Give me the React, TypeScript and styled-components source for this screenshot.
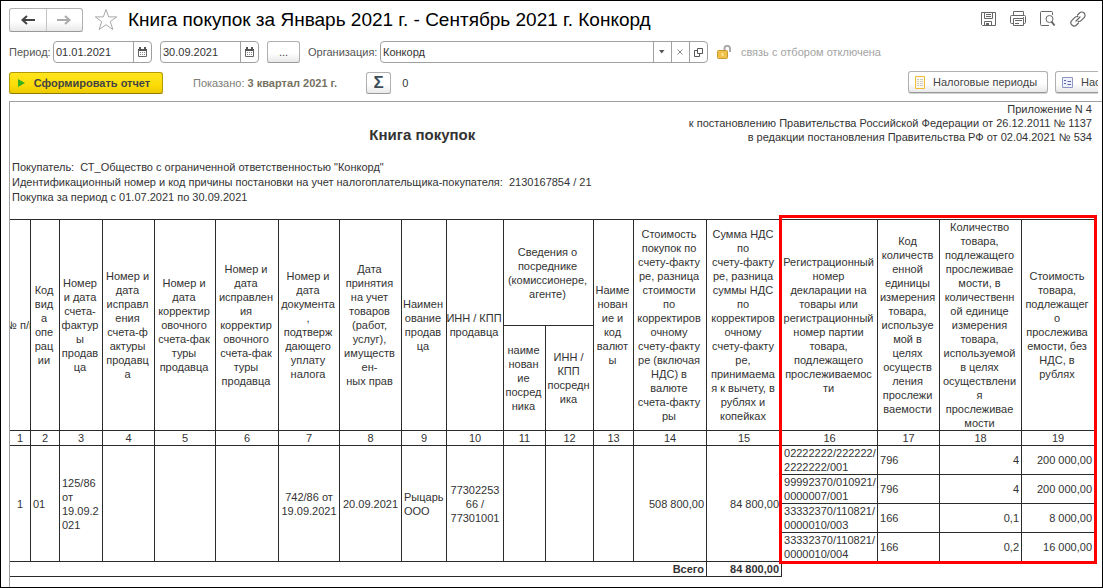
import React from "react";
import styled, { createGlobalStyle } from "styled-components";

const GlobalStyle = createGlobalStyle`
  *, *::before, *::after { box-sizing: border-box; }
  body { margin: 0; background: #fff; }
  body, button, input, table { font: 11px/14px "Liberation Sans", Arial, sans-serif; color: #333; }
  svg { flex: none; }
`;

const Frame = styled.main`
  display: flex;
  flex-direction: column;
  min-height: 100vh;
  padding: 6px 0 0 8px;
  border: 1px solid #000;
  overflow: hidden;
`;

const Bar = styled.div<{ $height: number; $after: number }>`
  display: flex;
  align-items: center;
  height: ${(p) => p.$height}px;
  margin-bottom: ${(p) => p.$after}px;
  white-space: nowrap;
  overflow: hidden;
`;

const Button = styled.button<{ $accent?: boolean; $width?: number }>`
  display: inline-flex;
  align-items: center;
  justify-content: center;
  flex: none;
  gap: 8px;
  width: ${(p) => (p.$width ? `${p.$width}px` : "auto")};
  height: 22px;
  padding: 0 10px 0 6px;
  border: 1px solid ${(p) => (p.$accent ? "#b39a00" : "#b0b0b0")};
  border-bottom-color: ${(p) => (p.$accent ? "#8f7b00" : "#999")};
  border-radius: 3px;
  background: ${(p) =>
    p.$accent
      ? "linear-gradient(#ffe51f, #fbdc08 60%, #ecca00)"
      : "linear-gradient(#fff 55%, #e9e9e9)"};
  box-shadow: 0 1px 0 ${(p) => (p.$accent ? "#c9b653" : "#d2d2d2")};
  color: #444;
  font-weight: ${(p) => (p.$accent ? "bold" : "normal")};
  cursor: pointer;
`;

const DotsButton = styled(Button)`
  margin: 0 8px;
  padding: 0;
`;

const SumButton = styled(Button)`
  margin: 0 11px 0 29px;
  padding: 0;
  color: #3b4d59;
  font-size: 17px;
  font-weight: bold;
`;

const ButtonGroup = styled.div`
  display: flex;
  gap: 7px;
  flex: none;
  width: 190px;
  margin-left: auto;
  margin-right: 4px;
  height: 23px;
  overflow: hidden;
`;

const NavGroup = styled.div`
  display: flex;
  flex: none;
  width: 74px;
  height: 24px;
  border: 1px solid #b0b0b0;
  border-bottom-color: #999;
  border-radius: 3px;
  background: linear-gradient(#fff 55%, #e9e9e9);
  box-shadow: 0 1px 0 #d2d2d2;
`;

const NavButton = styled.button`
  display: flex;
  flex: 1;
  align-items: center;
  justify-content: center;
  padding: 0;
  border: 0;
  background: none;
  & + & { border-left: 1px solid #c4c4c4; }
`;

const IconButton = styled.button`
  display: flex;
  flex: none;
  padding: 0;
  border: 0;
  background: none;
`;

const StarButton = styled(IconButton)`
  margin: 0 10px 0 11px;
`;

const PageTitle = styled.h1`
  margin: 0;
  color: #000;
  font-size: 19px;
  line-height: 24px;
  font-weight: normal;
`;

const IconStrip = styled.div`
  display: flex;
  gap: 12px;
  margin-left: auto;
  margin-right: 15px;
`;

const Label = styled.label<{ $width: number }>`
  flex: none;
  width: ${(p) => p.$width}px;
  color: #555;
`;

const Field = styled.div<{ $width: string }>`
  display: flex;
  flex: none;
  width: ${(p) => p.$width};
  height: 22px;
  border: 1px solid #a0a0a0;
  border-radius: 4px;
  & + & { margin-left: 8px; }
`;

const FieldInput = styled.input`
  flex: 1;
  width: 0;
  min-width: 0;
  padding: 0 2px;
  border: 0;
  background: none;
  outline: 0;
`;

const FieldButton = styled.button`
  display: flex;
  align-items: center;
  justify-content: center;
  flex: none;
  width: 18px;
  padding: 0;
  border: 0;
  border-left: 1px solid #a0a0a0;
  background: none;
`;

const LinkState = styled.span`
  display: flex;
  align-items: center;
  gap: 9px;
  margin-left: 9px;
  color: #a3a3a3;
`;

const Shown = styled.span`
  margin-left: 30px;
  color: #7d7d76;
  b { color: #77725f; }
`;

const Report = styled.section`
  flex: 1;
  padding: 0 7px 10px 0;
  border: solid #a0a0a0;
  border-width: 1px 0 0 1px;
`;

const ReportHead = styled.header`
  display: grid;
  align-items: start;
  margin-bottom: 16px;
  > * { grid-area: 1 / 1; }
`;

const ReportTitle = styled.h2`
  margin: 24px 24% 0 0;
  font-size: 15px;
  line-height: 18px;
  text-align: center;
`;

const Appendix = styled.p`
  margin: 0;
  padding-right: 3px;
  text-align: right;
`;

const Buyer = styled.p`
  margin: 0 0 14px;
  padding-left: 2px;
  line-height: 15px;
  white-space: pre-wrap;
`;

const TableArea = styled.div`
  position: relative;
`;

/* Frame over columns 16-19, down to the last invoice row */
const Highlight = styled.div`
  position: absolute;
  top: -4px;
  right: -2px;
  bottom: 13px;
  left: calc(100% * 772 / 1085 - 3px);
  border: 3px solid #f00;
  pointer-events: none;
`;

const Ledger = styled.table`
  width: 100%;
  table-layout: fixed;
  border-collapse: separate;
  border-spacing: 0;
  border-top: 1px solid #2b2b2b;
`;

const Cell = styled.td<{ $align?: string }>`
  padding: 0 2px;
  border: solid #2b2b2b;
  border-width: 0 1px 1px 0;
  text-align: ${(p) => p.$align ?? "left"};
  vertical-align: middle;
  white-space: nowrap;
`;

const HeadCell = styled.th`
  padding: 0;
  border: solid #2b2b2b;
  border-width: 0 1px 1px 0;
  font-weight: normal;
  text-align: center;
  vertical-align: middle;
  white-space: nowrap;
`;

const HeadText = styled.div<{ $shared: boolean }>`
  display: flex;
  justify-content: center;
  padding-right: ${(p) => (p.$shared ? 2 : 0)}px;
  overflow: hidden;
`;

const Row = styled.tr<{ $height: number }>`
  height: ${(p) => p.$height}px;
`;

const TotalCell = styled(Cell)`
  font-weight: bold;
`;

const widths = [21, 29, 43, 52, 61, 63, 61, 62, 45, 57, 42, 48, 40, 73, 75, 96, 62, 82, 73];

const before = [
  "№ п/п",
  "Код|вид|а|опе|рац|ии",
  "Номер|и дата|счета-|фактур|ы|продав|ца",
  "Номер и|дата|исправл|ения|счета-ф|актуры|продавц|а",
  "Номер и|дата|корректир|овочного|счета-фак|туры|продавца",
  "Номер и|дата|исправлен|ия|корректир|овочного|счета-фак|туры|продавца",
  "Номер и|дата|документа|,|подтверж|дающего|уплату|налога",
  "Дата|принятия|на учет|товаров|(работ,|услуг),|имуществ|ен-|ных прав",
  "Наимен|ование|продав|ца",
  "ИНН / КПП|продавца",
];

const after = [
  "Наиме|нован|ие и|код|валют|ы",
  "Стоимость|покупок по|счету-факту|ре, разница|стоимости|по|корректиров|очному|счету-факту|ре (включая|НДС) в|валюте|счета-факту|ры",
  "Сумма НДС|по|счету-факту|ре, разница|суммы НДС|по|корректиров|очному|счету-факту|ре,|принимаема|я к вычету, в|рублях и|копейках",
  "Регистрационный|номер|декларации на|товары или|регистрационный|номер партии|товара,|подлежащего|прослеживаемос|ти",
  "Код|количеств|енной|единицы|измерения|товара,|используе|мой в|целях|осуществ|ления|прослежи|ваемости",
  "Количество|товара,|подлежащего|прослеживае|мости, в|количественн|ой единице|измерения|товара,|используемой|в целях|осуществлени|я|прослеживае|мости",
  "Стоимость|товара,|подлежащег|о|прослежива|емости, без|НДС, в|рублях",
];

const goods = [
  ["02222222/222222/|2222222/001", "796", "4", "200 000,00"],
  ["99992370/010921/|0000007/001", "796", "4", "200 000,00"],
  ["33332370/110821/|0000010/003", "166", "0,1", "8 000,00"],
  ["33332370/110821/|0000010/004", "166", "0,2", "16 000,00"],
];

const invoice: { text: string; align?: string }[] = [
  { text: "1", align: "center" },
  { text: "01" },
  { text: "125/86|от|19.09.2|021" },
  { text: "" },
  { text: "" },
  { text: "" },
  { text: "742/86 от|19.09.2021", align: "center" },
  { text: "20.09.2021", align: "center" },
  { text: "Рыцарь|ООО" },
  { text: "77302253|66 /|77301001", align: "center" },
  { text: "" },
  { text: "" },
  { text: "" },
  { text: "508 800,00", align: "right" },
  { text: "84 800,00", align: "right" },
];

const Lines = ({ text }: { text: string }) => (
  <span>
    {text.split("|").map((line, i) => (
      <React.Fragment key={i}>
        {i > 0 && <br />}
        {line}
      </React.Fragment>
    ))}
  </span>
);

const Head = ({ text, ...rest }: { text: string; rowSpan?: number; colSpan?: number }) => (
  <HeadCell {...rest}>
    <HeadText $shared={text.includes("|")}>
      <Lines text={text} />
    </HeadText>
  </HeadCell>
);

const Arrow = ({ color, flip }: { color: string; flip?: boolean }) => (
  <svg width="16" height="12" viewBox="0 0 16 12" fill="none" stroke={color} strokeWidth="2">
    <path d={flip ? "M1 6h13M9 2l4.5 4L9 10" : "M15 6H2M7 2L2.5 6L7 10"} />
  </svg>
);

const CalendarIcon = () => (
  <svg width="9" height="10" viewBox="0 0 9 10">
    <path d="M.5 2.5h8v7h-8z" fill="#fff" stroke="#666" />
    <path d="M0 2h9v2H0zM1 0h2v2H1zM6 0h2v2H6z" fill="#555" />
    <path d="M2 5h1v1H2zM4 5h1v1H4zM6 5h1v1H6zM2 7h1v1H2zM4 7h1v1H4zM6 7h1v1H6z" fill="#888" />
  </svg>
);

const DateField = ({ id, value, label }: { id: string; value: string; label?: string }) => (
  <Field $width="99px">
    <FieldInput id={id} defaultValue={value} aria-label={label} />
    <FieldButton aria-label="Выбрать дату">
      <CalendarIcon />
    </FieldButton>
  </Field>
);

export default function App() {
  return (
    <Frame>
      <GlobalStyle />
      <Bar $height={25} $after={9}>
        <NavGroup>
          <NavButton aria-label="Назад"><Arrow color="#444" /></NavButton>
          <NavButton aria-label="Вперед"><Arrow color="#aaa" flip /></NavButton>
        </NavGroup>
        <StarButton aria-label="В избранное">
          <svg width="24" height="23" viewBox="0 0 24 23" fill="none" stroke="#a8a8a8">
            <path d="M12 1.5l2.7 7.4h8l-6.4 4.7 2.5 7.9-6.8-4.8-6.8 4.8 2.5-7.9L1.3 8.9h8z" />
          </svg>
        </StarButton>
        <PageTitle>Книга покупок за Январь 2021 г. - Сентябрь 2021 г. Конкорд</PageTitle>
        <IconStrip>
          <IconButton aria-label="Сохранить">
            <svg width="18" height="18" viewBox="0 0 18 18" fill="none" stroke="#666">
              <path d="M2.5 1.5h14v13h-13l-1-1zM5.5 1.5v6h8v-6M7 3.5h5M7 5.5h5M5.5 14.5v-4h7v4" />
              <path d="M7 12h3v3H7z" fill="#666" stroke="none" />
            </svg>
          </IconButton>
          <IconButton aria-label="Печать">
            <svg width="18" height="18" viewBox="0 0 18 18" fill="none" stroke="#666">
              <path d="M4.5 4.5v-4h10v4M4.5 12.5h-2q-1 0-1-1v-6q0-1 1-1h13q1 0 1 1v6q0 1-1 1h-1M4.5 7.5h10v7h-10zM6 9.5h7M6 12.5h4M14 6.5h1" />
            </svg>
          </IconButton>
          <IconButton aria-label="Просмотр">
            <svg width="18" height="18" viewBox="0 0 18 18" fill="none" stroke="#666">
              <path d="M13.5 4V1.5q0-1-1-1h-10q-1 0-1 1v12q0 1 1 1H10" />
              <circle cx="10.5" cy="8" r="3.500" />
              <path d="M12.500 10.500l3 4" strokeWidth="2" />
            </svg>
          </IconButton>
          <IconButton aria-label="Ссылка">
            <svg width="18" height="18" viewBox="0 0 18 18" fill="none" stroke="#666" strokeWidth="1.2" strokeLinecap="round">
              <path d="M8.500 4l2-2a3.200 3.200 0 0 1 4.600 4.600l-3 3a3.200 3.200 0 0 1-3 .8" />
              <path d="M9.500 12l-2 2a3.200 3.200 0 0 1-4.600-4.600l3-3a3.200 3.200 0 0 1 3-.8" />
              <path d="M7 10l4-4" />
            </svg>
          </IconButton>
        </IconStrip>
      </Bar>

      <Bar $height={22} $after={8}>
        <Label $width={44} htmlFor="from">Период:</Label>
        <DateField id="from" value="01.01.2021" />
        <DateField id="to" value="30.09.2021" label="Конец периода" />
        <DotsButton $width={33}>...</DotsButton>
        <Label $width={72} htmlFor="org">Организация:</Label>
        <Field $width="30%">
          <FieldInput id="org" defaultValue="Конкорд" />
          <FieldButton aria-label="Список">
            <svg width="6" height="4" viewBox="0 0 6 4"><path d="M0 0h5.5L2.75 3.5z" fill="#555" /></svg>
          </FieldButton>
          <FieldButton aria-label="Очистить">
            <svg width="6" height="6" viewBox="0 0 6 6" stroke="#888"><path d="M.5.5l5 5M5.5.5l-5 5" /></svg>
          </FieldButton>
          <FieldButton aria-label="Открыть">
            <svg width="9" height="9" viewBox="0 0 9 9" fill="none" stroke="#555"><path d="M3.5.5h5v5h-5zM3.5 2.5h-3v6h5v-3" /></svg>
          </FieldButton>
        </Field>
        <LinkState>
          <svg width="15" height="14" viewBox="0 0 15 14">
            <path d="M7.5 5V3.5a2.5 2.5 0 0 1 5.5 0V7" fill="none" stroke="#aaa" strokeWidth="2" />
            <rect x="0.5" y="5.5" width="10" height="8" rx="1" fill="#efc04a" stroke="#c79a2c" />
            <path d="M4.5 8h2v3h-2z" fill="#fae79c" />
          </svg>
          связь с отбором отключена
        </LinkState>
      </Bar>

      <Bar $height={23} $after={7}>
        <Button $accent $width={154}>
          <svg width="8" height="10" viewBox="0 0 8 10">
            <path d="M0 1l7 4-7 4z" fill="#37b01c" />
          </svg>
          Сформировать отчет
        </Button>
        <Shown>Показано: <b>3 квартал 2021 г.</b></Shown>
        <SumButton $width={25} aria-label="Сумма">Σ</SumButton>
        <output>0</output>
        <ButtonGroup>
          <Button $width={140}>
            <svg width="10" height="13" viewBox="0 0 10 13">
              <path d="M.5.5h9v12h-9z" fill="#fff8e4" stroke="#f0bd3a" />
              <path d="M2 3.5h2M5 3.5h3M2 5.5h2M5 5.5h3M2 7.5h2M5 7.5h3M2 9.5h2M5 9.5h3" stroke="#c9cbd2" />
            </svg>
            Налоговые периоды
          </Button>
          <Button>
            <svg width="11" height="11" viewBox="0 0 11 11">
              <path d="M.5.5h10v10H.5z" fill="#eef0fa" stroke="#8e96c4" />
              <path d="M2 3.5h2M2 6.5h2M5.5 4.5H9M5.5 7.5H9" stroke="#5864a8" />
            </svg>
            Настройки
          </Button>
        </ButtonGroup>
      </Bar>

      <Report>
        <ReportHead>
          <ReportTitle>Книга покупок</ReportTitle>
          <Appendix>
            Приложение N 4<br />
            к постановлению Правительства Российской Федерации от 26.12.2011 № 1137<br />
            в редакции постановления Правительства РФ от 02.04.2021 № 534
          </Appendix>
        </ReportHead>
        <Buyer>
          {'Покупатель:  СТ_Общество с ограниченной ответственностью "Конкорд"'}<br />
          {"Идентификационный номер и код причины постановки на учет налогоплательщика-покупателя:  2130167854 / 21"}<br />
          Покупка за период с 01.07.2021 по 30.09.2021
        </Buyer>
        <TableArea>
          <Ledger>
            <colgroup>
              {widths.map((w, i) => <col key={i} style={{ width: w }} />)}
            </colgroup>
            <thead>
              <Row $height={106}>
                {before.map((t) => <Head key={t} text={t} rowSpan={2} />)}
                <Head text="Сведения о|посреднике|(комиссионере,|агенте)" colSpan={2} />
                {after.map((t) => <Head key={t} text={t} rowSpan={2} />)}
              </Row>
              <Row $height={105}>
                <Head text="наиме|нован|ие|посред|ника" />
                <Head text="ИНН /|КПП|посредн|ика" />
              </Row>
              <Row $height={15}>
                {widths.map((_, i) => <Head key={i} text={String(i + 1)} />)}
              </Row>
            </thead>
            <tbody>
              {goods.map((g, i) => (
                <Row key={i} $height={29}>
                  {i === 0 && invoice.map((c, k) => (
                    <Cell key={k} rowSpan={4} $align={c.align}><Lines text={c.text} /></Cell>
                  ))}
                  <Cell><Lines text={g[0]} /></Cell>
                  <Cell>{g[1]}</Cell>
                  <Cell $align="right">{g[2]}</Cell>
                  <Cell $align="right">{g[3]}</Cell>
                </Row>
              ))}
            </tbody>
            <tfoot>
              <Row $height={15}>
                <TotalCell colSpan={14} $align="right">Всего</TotalCell>
                <TotalCell $align="right">84 800,00</TotalCell>
              </Row>
            </tfoot>
          </Ledger>
          <Highlight />
        </TableArea>
      </Report>
    </Frame>
  );
}
